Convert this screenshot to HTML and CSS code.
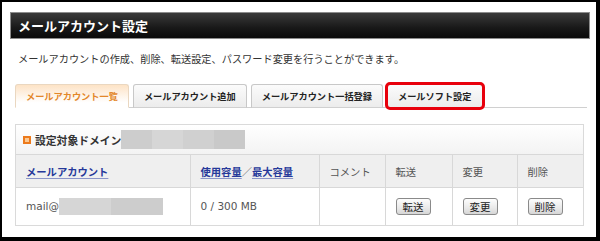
FILE: index.html
```html
<!DOCTYPE html>
<html lang="ja">
<head>
  <meta charset="UTF-8" />
  <title>メールアカウント設定</title>
  <link rel="stylesheet" href="styles.css">
</head>
<body>

<div class="page">
  <h1 class="title-bar">メールアカウント設定</h1>
  <p class="desc">メールアカウントの作成、削除、転送設定、パスワード変更を行うことができます。</p>

  <div class="tabs">
    <div class="tab active">メールアカウント一覧</div>
    <div class="tab">メールアカウント追加</div>
    <div class="tab">メールアカウント一括登録</div>
    <div class="tab marked">メールソフト設定</div>
  </div>

  <div class="panel">
    <div class="panel-head">
      <span class="bullet"></span>
      <span class="domain-label">設定対象ドメイン</span>
      <span class="mask">
        <i class="m1"></i><i class="m2"></i><i class="m3"></i><i class="m4"></i>
      </span>
    </div>
    <table class="accounts">
      <colgroup>
        <col style="width:174px">
        <col style="width:129px">
        <col style="width:66px">
        <col style="width:67px">
        <col style="width:65px">
        <col>
      </colgroup>
      <tr class="head-row">
        <th><a href="#">メールアカウント</a></th>
        <th><a href="#">使用容量</a>／<a href="#">最大容量</a></th>
        <th>コメント</th>
        <th>転送</th>
        <th>変更</th>
        <th>削除</th>
      </tr>
      <tr class="data-row">
        <td>mail@<span class="mask small"><i class="m2"></i><i class="m1"></i></span></td>
        <td>0 / 300 MB</td>
        <td></td>
        <td><button>転送</button></td>
        <td><button>変更</button></td>
        <td><button>削除</button></td>
      </tr>
    </table>
  </div>
</div>

</body>
</html>
```

FILE: styles.css
```css
* { box-sizing: border-box; margin: 0; padding: 0; }

html, body { height: 100%; }

body {
  background: #fff;
  color: #333;
  border-style: solid;
  border-color: #000;
  border-width: 2px 4px 4px 2px;
  font-family: "DejaVu Sans", "Noto Sans CJK JP", sans-serif;
  overflow: hidden;
}

.page {
  padding: 10px 6px 0 8px;
}

.title-bar {
  height: 27px;
  line-height: 25px;
  padding-left: 7px;
  border: 1px solid #8c8c8c;
  background: linear-gradient(#3a3a3a, #181818 60%, #0a0a0a);
  color: #fff;
  font-family: "Noto Sans CJK JP", sans-serif;
  font-size: 13px;
  font-weight: 700;
}

.desc {
  margin-top: 14px;
  padding-left: 8px;
  line-height: 12px;
  font-family: "Noto Sans CJK JP", sans-serif;
  font-size: 10.2px;
  color: #333;
}

.tabs {
  display: flex;
  gap: 4px;
  margin: 19px 3px 0 5px;
  border-bottom: 1px solid #d0d0d0;
}

.tab {
  height: 24px;
  line-height: 22px;
  padding: 0 10px;
  margin-bottom: -1px;
  border: 1px solid #c8c8c8;
  border-bottom: 1px solid #d0d0d0;
  border-radius: 3px 3px 0 0;
  background: linear-gradient(#fbfbfb, #ececec);
  color: #222;
  font-family: "Noto Sans CJK JP", sans-serif;
  font-size: 9.2px;
  font-weight: 700;
}

.tab.active {
  background: linear-gradient(#fde3c6, #fff 80%);
  border-color: #ead7c0;
  border-bottom-color: #fff;
  color: #e3872a;
}

.tab.marked {
  outline: 3px solid #e8000c;
  outline-offset: -1px;
  border-radius: 3px;
}

.panel {
  margin: 16px 6px 0 5px;
  border: 1px solid #dadada;
}

.panel-head {
  display: flex;
  align-items: center;
  height: 29px;
  padding-left: 7px;
  background: linear-gradient(#fff, #f3f3f3);
  font-family: "Noto Sans CJK JP", sans-serif;
  font-size: 10.8px;
  font-weight: 700;
  color: #333;
}

.bullet {
  width: 8px;
  height: 8px;
  margin-right: 4px;
  border: 2px solid #ec7a1c;
  background: #fbc892;
}

.mask {
  display: inline-flex;
  height: 19px;
}

.mask i { display: block; width: 31px; height: 100%; }
.mask .m1 { background: #cdcdcd; }
.mask .m2 { background: #d6d6d6; }
.mask .m3 { background: #d0d0d0; }
.mask .m4 { background: #c9c9c9; }

.mask.small {
  height: 17px;
  vertical-align: middle;
}
.mask.small i { width: 52px; }

.accounts {
  width: 100%;
  table-layout: fixed;
  border-collapse: collapse;
}

.accounts th, .accounts td {
  padding: 0 0 0 10px;
  border-top: 1px solid #d8d8d8;
  border-left: 1px solid #d8d8d8;
  text-align: left;
  vertical-align: middle;
  white-space: nowrap;
}

.accounts th:first-child, .accounts td:first-child { border-left: none; }

.head-row th {
  height: 33px;
  background: #efefef;
  font-family: "Noto Sans CJK JP", sans-serif;
  font-size: 10.3px;
  font-weight: 400;
  color: #555;
}

.head-row a {
  color: #26399a;
  font-weight: 700;
  text-decoration: underline;
  text-decoration-color: #8b95c9;
  text-underline-offset: 2px;
}

.data-row td {
  height: 37px;
  font-size: 10.5px;
  color: #555;
}

button {
  height: 17px;
  padding: 0 6px;
  border: 1px solid #8a8a8a;
  border-radius: 3px;
  background: linear-gradient(#fdfdfd, #e9e9e9 60%, #d6d6d6);
  color: #222;
  font-family: "Noto Sans CJK JP", sans-serif;
  font-size: 10.5px;
  line-height: 15px;
}
```
